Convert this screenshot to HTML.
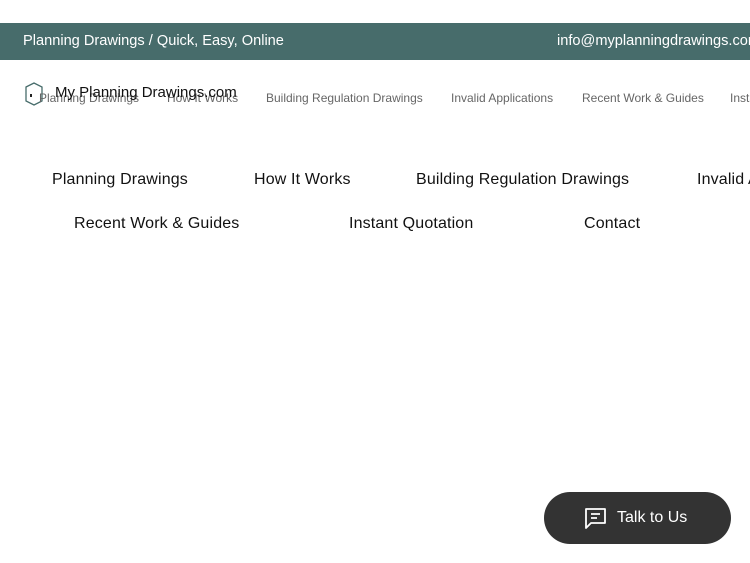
<!DOCTYPE html>
<html><head><meta charset="utf-8"><style>
body{margin:0;width:750px;height:563px;overflow:hidden;background:#fff;font-family:"Liberation Sans",sans-serif;position:relative}
.bar{position:absolute;top:23px;left:0;width:750px;height:37px;background:#476c6b;color:#fff;font-size:14.6px;overflow:hidden}
.bar span{position:absolute;top:10px;white-space:nowrap}
.a{position:absolute;white-space:nowrap}
.sm{font-size:12px;color:#666;top:91px}
.big{font-size:16px;color:#111;letter-spacing:.15px}
.btn{position:absolute;left:544px;top:492px;width:187px;height:52px;border-radius:26px;background:#333;color:#fff;font-size:16px}
</style></head><body>
<div class="bar"><span style="left:23px">Planning Drawings / Quick, Easy, Online</span><span style="left:557px">info@myplanningdrawings.com</span></div>
<svg class="a" style="left:23px;top:81px" width="22" height="26" viewBox="0 0 22 26"><path d="M3 6 L11 2 L19 6 L19 20 L11 24 L3 20 Z" fill="none" stroke="#476c6b" stroke-width="1.3"/><rect x="7" y="13" width="2" height="3" fill="#222"/></svg>
<div class="a sm" style="left:39px">Planning Drawings</div>
<div class="a sm" style="left:167px">How It Works</div>
<div class="a" style="left:55px;top:84px;font-size:15px;color:#111">My Planning Drawings.com</div>
<div class="a sm" style="left:266px">Building Regulation Drawings</div>
<div class="a sm" style="left:451px">Invalid Applications</div>
<div class="a sm" style="left:582px">Recent Work &amp; Guides</div>
<div class="a sm" style="left:730px">Instant Quotation</div>
<div class="a big" style="left:52px;top:171px">Planning Drawings</div>
<div class="a big" style="left:254px;top:171px">How It Works</div>
<div class="a big" style="left:416px;top:171px">Building Regulation Drawings</div>
<div class="a big" style="left:697px;top:171px">Invalid Applications</div>
<div class="a big" style="left:74px;top:215px">Recent Work &amp; Guides</div>
<div class="a big" style="left:349px;top:215px">Instant Quotation</div>
<div class="a big" style="left:584px;top:215px">Contact</div>
<div class="btn">
<svg style="position:absolute;left:40px;top:15px" width="23" height="23" viewBox="0 0 23 23"><path d="M2 2 H21 V16 H7 L2 21 Z" fill="none" stroke="#fff" stroke-width="1.8" stroke-linejoin="round"/><path d="M7 7 H16 M7 11 H13" stroke="#fff" stroke-width="1.8"/></svg>
<span style="position:absolute;left:73px;top:17px">Talk to Us</span></div>
</body></html>
